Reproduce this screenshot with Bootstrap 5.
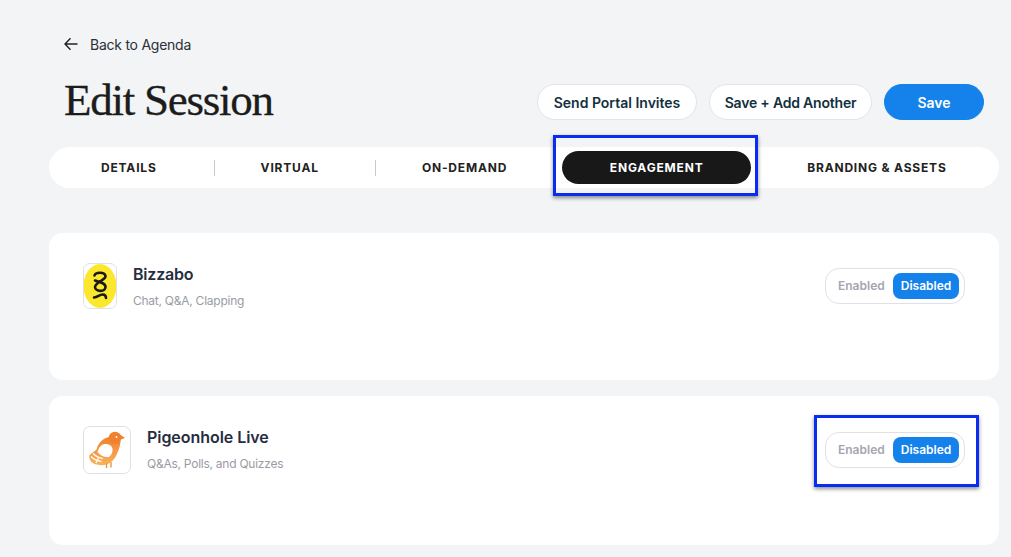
<!DOCTYPE html>
<html lang="en">
<head>
<meta charset="utf-8">
<title>Edit Session</title>
<link href="https://cdn.jsdelivr.net/npm/bootstrap@5.3.0/dist/css/bootstrap.min.css" rel="stylesheet">
<style>
html,body{height:557px;overflow:hidden}
body{background:#f3f4f6;font-family:Inter,"Liberation Sans",sans-serif;color:#1a1a1a}
.pagewrap{padding:33px 12px 0 49px}
.backlink{margin-left:15px;height:22px;font-size:14px;color:#2b2f36;text-decoration:none;gap:12px;letter-spacing:-.25px}
.headrow{margin-top:15px;height:64px;padding:0 15px}
.pagetitle{font-family:"Liberation Serif",serif;font-size:45px;font-weight:400;letter-spacing:-1.25px;color:#1c1c1c;margin:0 0 5px;line-height:60px;-webkit-text-stroke:.3px #1c1c1c}
.pillbtn{height:36px;border-radius:18px;font-size:14px;font-weight:600;padding:0;display:flex;align-items:center;justify-content:center;color:#12303d;background:#fff;border:1px solid #e1e4e8}
.pillbtn:hover{background:#fff;color:#12303d;border-color:#e1e4e8}
.btnrow{column-gap:12px}
.btn-a{width:160px}.btn-b{width:163px;letter-spacing:-.2px}
.btn-c{width:100px;background:#1482ea;border-color:#1482ea;color:#fff}
.btn-c:hover{background:#1482ea;border-color:#1482ea;color:#fff}
.tabbar{margin-top:13px;height:41px;background:#fff;border-radius:21px;padding-left:52px;position:relative}
.tabitem{font-size:12px;font-weight:700;letter-spacing:.82px;color:#222;text-decoration:none;white-space:nowrap}
.tabsep{width:1px;height:16px;background:#c8c8c8}
.sp-55{margin-right:55px}.sp-56{margin-right:56px}.sp-57{margin-right:57px}.sp-46{margin-right:46px}
.tabactive{position:relative;width:189px;height:33px;border-radius:17px;background:#181818;color:#fff;display:flex;align-items:center;justify-content:center;margin-right:56px}
.markbox{position:absolute;border:3px solid #0a2bf0;box-shadow:0 2px 4px rgba(0,0,0,.45);pointer-events:none}
.mark-tab{left:-9px;top:-16px;width:205px;height:61px}
.mark-toggle{left:-12px;top:-18px;width:165px;height:72px}
.itemcard{background:#fff;border-radius:14px;padding:30px 34px 0}
.card-one{margin-top:45px;height:147px}
.card-two{margin-top:16px;height:149px}
.logobox{border:1px solid #dfe1e5;border-radius:7px;background:#fff;display:flex;align-items:center;justify-content:center;flex-shrink:0;overflow:hidden}
.logo-one{width:34px;height:46px;margin-right:16px}
.logo-two{width:48px;height:48px;margin-right:16px}
.itemname{font-size:16px;font-weight:600;color:#252d3f;line-height:20px;margin-top:1px;letter-spacing:-.2px}
.name-wide{letter-spacing:-.05px}
.itemsub{font-size:12px;color:#9a9ca5;line-height:16px;margin-top:9px;letter-spacing:-.25px}
.togglewrap{position:relative;width:140px;height:36px;border:1px solid #e0e1e6;border-radius:14px;padding:0 5px 0 12px;font-size:12px;font-weight:600}
.tog-one{margin-top:5px}.tog-two{margin-top:6px}
.tog-off{color:#a5a6b2}
.tog-on{width:66px;height:26px;background:#1482ea;color:#fff;border-radius:8px;display:flex;align-items:center;justify-content:center}
</style>
</head>
<body>
<div class="pagewrap">
  <a href="#" class="backlink d-flex align-items-center">
    <svg width="14" height="14" viewBox="0 0 14 14" fill="none" stroke="#222" stroke-width="1.4"><path d="M13.500 7H1M6.500 1.200 1 7l5.500 5.800"/></svg>
    <span>Back to Agenda</span>
  </a>
  <div class="headrow d-flex align-items-center justify-content-between">
    <h1 class="pagetitle">Edit Session</h1>
    <div class="d-flex btnrow">
      <button class="btn pillbtn btn-a">Send Portal Invites</button>
      <button class="btn pillbtn btn-b">Save + Add Another</button>
      <button class="btn pillbtn btn-c">Save</button>
    </div>
  </div>
  <nav class="tabbar d-flex align-items-center">
    <a href="#" class="tabitem sp-57">DETAILS</a><span class="tabsep sp-46"></span>
    <a href="#" class="tabitem sp-56">VIRTUAL</a><span class="tabsep sp-46"></span>
    <a href="#" class="tabitem sp-55">ON-DEMAND</a>
    <a href="#" class="tabitem tabactive">ENGAGEMENT<span class="markbox mark-tab"></span></a>
    <a href="#" class="tabitem">BRANDING &amp; ASSETS</a>
  </nav>
  <section class="itemcard card-one d-flex justify-content-between align-items-start">
    <div class="d-flex">
      <div class="logobox logo-one">
        <svg width="32" height="44" viewBox="0 0 32 44"><ellipse cx="16" cy="22" rx="16.500" ry="22" fill="#fce72f"/><path d="M10.500 11.500c1-3.500 10-3.800 11 .5.800 4-10 5.500-10.500 11 0 4.800 10 5.500 10.500 0 .3-4-6.500-5-10.500-6.500M10 33.500c3.500 0 5.500-3 8.500-3 2.300 0 3.500 1.500 3.500 3.500" fill="none" stroke="#1a1a18" stroke-width="2.600" stroke-linecap="round" stroke-linejoin="round"/></svg>
      </div>
      <div>
        <div class="itemname">Bizzabo</div>
        <div class="itemsub">Chat, Q&amp;A, Clapping</div>
      </div>
    </div>
    <div class="togglewrap tog-one d-flex align-items-center justify-content-between">
      <span class="tog-off">Enabled</span><span class="tog-on">Disabled</span>
    </div>
  </section>
  <section class="itemcard card-two d-flex justify-content-between align-items-start">
    <div class="d-flex">
      <div class="logobox logo-two">
        <svg width="38" height="38" viewBox="0 0 38 38">
          <defs><linearGradient id="birdfill" x1="0" y1="0" x2="0" y2="1"><stop offset="0" stop-color="#f0812e"/><stop offset="1" stop-color="#f9b25c"/></linearGradient></defs>
          <path d="M22 6C14 7 10 13 8.500 18.500L1.500 24C.5 29 4 33 9 33.500 17 36 25 32 28.500 24 31 18 33 13 32.500 8z" fill="url(#birdfill)"/>
          <circle cx="27" cy="7" r="6.300" fill="#f0812e"/>
          <path d="M32 3.500 37 7l-5 1.800z" fill="#f0812e"/>
          <circle cx="28.500" cy="6" r=".9" fill="#fff"/>
          <path d="M15 13.500c4-1.500 8.500.5 9.500 4 .5 3-1 6.500-3.500 8.500-4.500.5-9-1.500-11.500-5 .8-3.500 3-6.500 5.500-7.500z" fill="#fff"/>
          <path d="M3 25.500c2.500 2.800 7 4.500 10.500 4.800M5 22.500c2.500 2.500 6.500 4.500 10 5M8 32c.5-2 1.500-3.500 2.500-5" stroke="#fff" stroke-width="1.200" fill="none"/>
          <path d="M18.500 32.500V37M23 31v5.500" stroke="#ec9440" stroke-width="1.400" fill="none"/>
        </svg>
      </div>
      <div>
        <div class="itemname name-wide">Pigeonhole Live</div>
        <div class="itemsub">Q&amp;As, Polls, and Quizzes</div>
      </div>
    </div>
    <div class="togglewrap tog-two d-flex align-items-center justify-content-between">
      <span class="tog-off">Enabled</span><span class="tog-on">Disabled</span>
      <span class="markbox mark-toggle"></span>
    </div>
  </section>
</div>
<script src="https://cdn.jsdelivr.net/npm/bootstrap@5.3.0/dist/js/bootstrap.bundle.min.js"></script>
</body>
</html>
